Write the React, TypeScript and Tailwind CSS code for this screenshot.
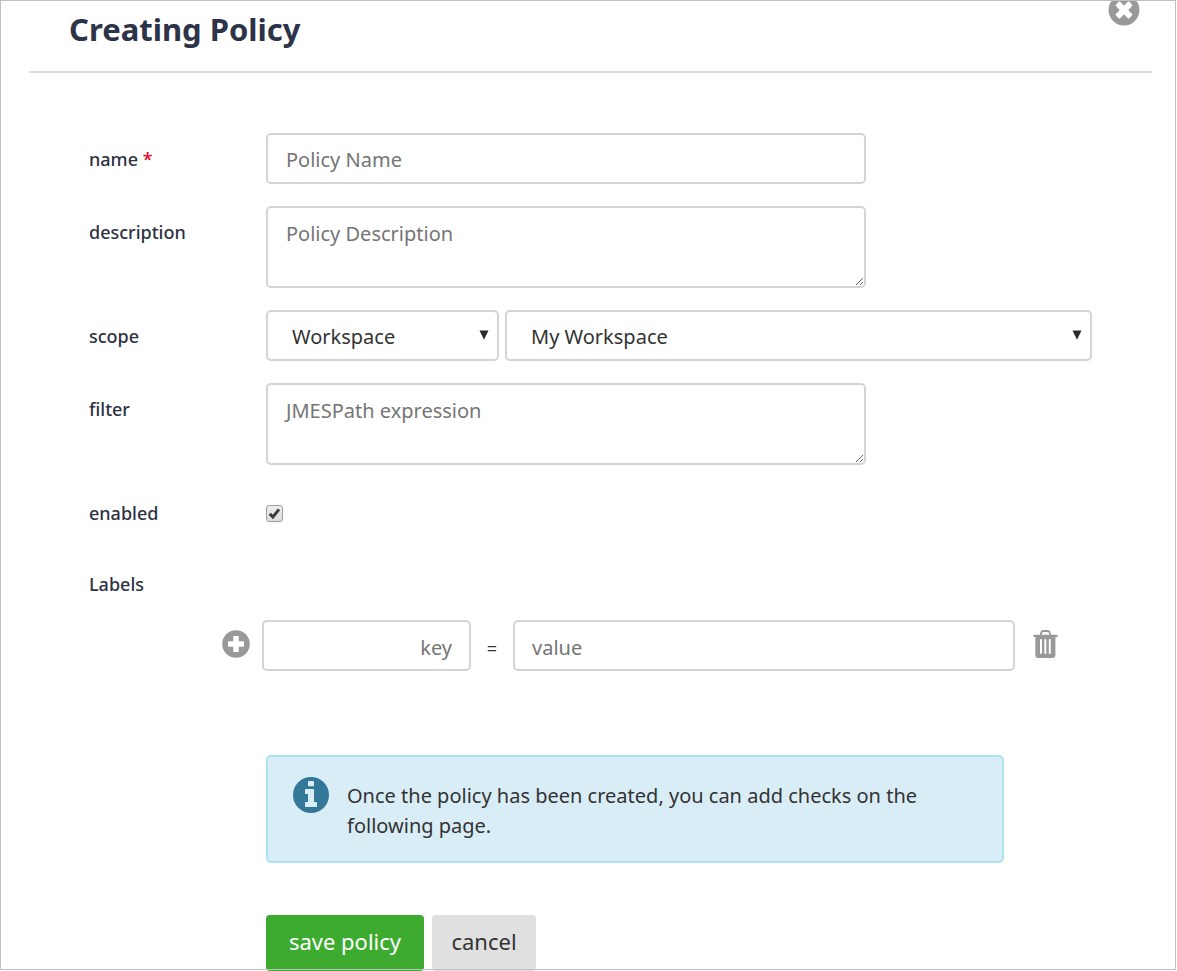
import type { ReactNode } from "react";

const fieldClass =
  "rounded-[5px] border-2 border-[#d4d4d4] bg-white text-xl text-[#333] placeholder:text-[#757575] outline-none focus:border-[#9a9a9a]";

function Row({ label, htmlFor, required, children }: { label: string; htmlFor: string; required?: boolean; children: ReactNode }) {
  return (
    <div className="flex">
      <label htmlFor={htmlFor} className="w-[177px] shrink-0 pt-3 text-lg leading-7 font-medium text-[#2d3142]">
        {label}
        {required && <span className="text-[#f00020]"> *</span>}
      </label>
      <div className="flex min-w-0 flex-1 gap-1.5">{children}</div>
    </div>
  );
}

function Select({ id, label, value, className }: { id: string; label: string; value: string; className: string }) {
  return (
    <div className={`relative ${className}`}>
      <select id={id} aria-label={label} className={`${fieldClass} h-[51px] w-full appearance-none pt-0.5 pr-8 pl-6`}>
        <option>{value}</option>
      </select>
      <svg viewBox="0 0 10 10" className="pointer-events-none absolute top-5 right-2.5 size-2.5" aria-hidden="true">
        <path d="M0.5 0.5h9L5 9.8z" fill="#2b2b2b" />
      </svg>
    </div>
  );
}

function CloseIcon() {
  return (
    <svg viewBox="0 0 32 32" className="size-8" aria-hidden="true">
      <circle cx="16" cy="16" r="15.4" fill="#999" />
      <g fill="#fff" transform="rotate(45 16 16)">
        <rect x="6.5" y="13" width="19" height="6" rx="1" />
        <rect x="13" y="6.5" width="6" height="19" rx="1" />
      </g>
    </svg>
  );
}

function PlusIcon() {
  return (
    <svg viewBox="0 0 28 28" className="size-7" aria-hidden="true">
      <circle cx="14" cy="14" r="13.8" fill="#999" />
      <rect x="6" y="11.2" width="16" height="5.6" rx="0.8" fill="#fff" />
      <rect x="11.2" y="6" width="5.6" height="16" rx="0.8" fill="#fff" />
    </svg>
  );
}

function TrashIcon() {
  return (
    <svg viewBox="0 0 25 28" className="h-7 w-[25px]" aria-hidden="true">
      <path d="M7.600 5.200L8.300 2.600Q8.700 1 10.300 1h4.400q1.600 0 2 1.600l.7 2.600" fill="none" stroke="#999" strokeWidth="1.800" />
      <rect x="0.2" y="4.700" width="24.600" height="2.200" rx="0.9" fill="#999" />
      <path
        fillRule="evenodd"
        fill="#999"
        d="M2.300 6h20.100v19.600a2.400 2.400 0 0 1-2.400 2.400H4.700a2.400 2.400 0 0 1-2.400-2.400zM7 9.200v14.600h2V9.200zM11.300 9.200v14.600h2V9.200zM15.800 9.200v14.600h2V9.200z"
      />
    </svg>
  );
}

function InfoIcon() {
  return (
    <svg viewBox="0 0 36 36" className="size-9 shrink-0" aria-hidden="true">
      <circle cx="18" cy="18" r="18" fill="#337799" />
      <g fill="#d9edf7">
        <rect x="15" y="4" width="6" height="5.200" rx="0.6" />
        <path d="M12.600 12h7.800q.6 0 .6.6V25h2.400q.6 0 .6.6v3.800q0 .6-.6.6H12.600q-.6 0-.6-.6v-3.800q0-.6.6-.6H15v-8h-2.400q-.6 0-.6-.6v-3.800q0-.6.6-.6z" />
      </g>
    </svg>
  );
}

export default function App() {
  return (
    <main className="relative overflow-hidden bg-white font-['Noto_Sans',sans-serif] text-[#333]">
      <header className="mr-[25px] ml-[29px] flex h-[73px] items-start justify-between border-b-2 border-[#dcdcdc] pr-3 pl-10">
        <h1 className="pt-2 text-[31px] leading-[42px] font-bold text-[#2d3348]">Creating Policy</h1>
        <button type="button" aria-label="Close" className="-mt-1.5">
          <CloseIcon />
        </button>
      </header>

      <form className="pt-[60px] pr-[85px] pl-[89px]" onSubmit={(e) => e.preventDefault()}>
        <div className="flex flex-col gap-[22px]">
          <Row label="name" htmlFor="name" required>
            <input id="name" type="text" placeholder="Policy Name" className={`${fieldClass} h-[51px] w-full max-w-[600px] px-[18px] pt-0.5`} />
          </Row>
          <Row label="description" htmlFor="description">
            <textarea id="description" placeholder="Policy Description" className={`${fieldClass} h-[82px] w-full max-w-[600px] px-[18px] py-3`} />
          </Row>
          <Row label="scope" htmlFor="scope">
            <Select id="scope" label="scope" value="Workspace" className="w-[233px]" />
            <Select id="workspace" label="workspace" value="My Workspace" className="flex-1" />
          </Row>
          <Row label="filter" htmlFor="filter">
            <textarea id="filter" placeholder="JMESPath expression" className={`${fieldClass} h-[82px] w-full max-w-[600px] px-[18px] py-3`} />
          </Row>
          <Row label="enabled" htmlFor="enabled">
            <span className="relative mt-[18px] size-[17px]">
              <input
                id="enabled"
                type="checkbox"
                defaultChecked
                className="peer block size-[17px] appearance-none rounded-[3px] border border-[#a0a0a0] bg-linear-to-b from-[#eee] to-[#dcdcdc] shadow-xs"
              />
              <svg viewBox="0 0 17 17" className="pointer-events-none absolute inset-0 hidden size-[17px] peer-checked:block" aria-hidden="true">
                <path d="M3.800 8.900L6.900 12L13 4.400" fill="none" stroke="#3c3c3c" strokeWidth="3" />
              </svg>
            </span>
          </Row>
        </div>

        <fieldset>
          <legend className="pt-[43px] text-lg leading-7 font-medium text-[#2d3142]">Labels</legend>
          <div className="mt-[22px] mr-[34px] ml-[133px] flex items-center">
            <button type="button" aria-label="Add label" className="-mt-1 mr-3">
              <PlusIcon />
            </button>
            <input type="text" aria-label="Label key" placeholder="key" className={`${fieldClass} h-[51px] w-[209px] px-[17px] pt-1 text-right`} />
            <span className="w-[42px] pt-1 text-center text-lg">=</span>
            <input type="text" aria-label="Label value" placeholder="value" className={`${fieldClass} h-[51px] min-w-0 flex-1 px-[17px] pt-1`} />
            <button type="button" aria-label="Delete label" className="-mt-1 ml-[18px]">
              <TrashIcon />
            </button>
          </div>
        </fieldset>

        <div className="ml-[177px]">
          <div className="mt-[84px] flex max-w-[738px] gap-[18px] rounded-[5px] border-2 border-[#ace4ee] bg-[#d9edf7] px-[25px] py-5">
            <InfoIcon />
            <p className="pt-1 text-xl leading-[30px]">Once the policy has been created, you can add checks on the following page.</p>
          </div>
          <div className="mt-[52px] flex gap-2 text-[22px]">
            <button type="submit" className="h-14 w-[158px] rounded-[4px] bg-[#3dab30] pb-1 text-white">
              save policy
            </button>
            <button type="button" className="h-14 w-[104px] rounded-[4px] bg-[#e0e0e0] pb-1">
              cancel
            </button>
          </div>
        </div>
      </form>

      <div className="pointer-events-none absolute top-0 right-px bottom-px left-0 border border-[#c0c0c0]" />
    </main>
  );
}
